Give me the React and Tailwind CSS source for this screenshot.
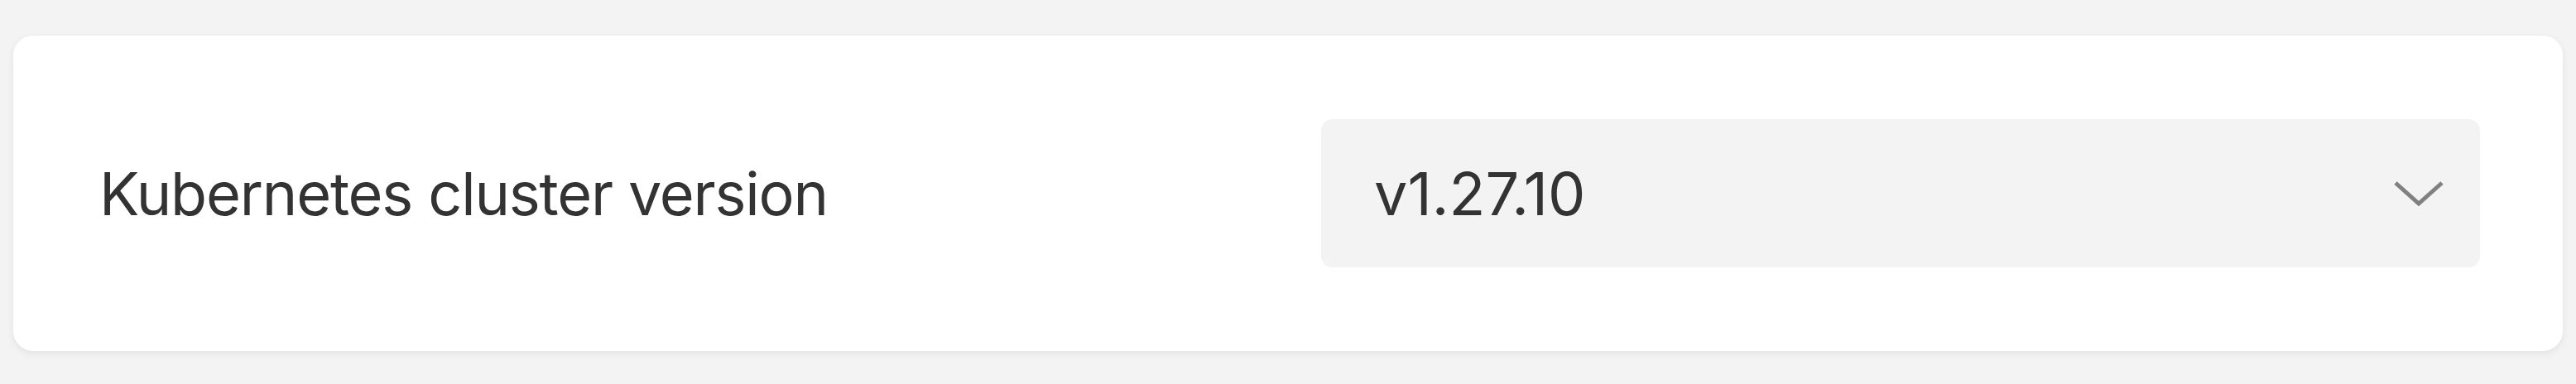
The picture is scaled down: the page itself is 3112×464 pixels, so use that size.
import React from "react";

// Version select row
function VersionSelect({ value }) {
    return (
        <div className="w-[1400px] h-[179px] shrink-0 rounded-[14px] bg-[#f3f3f3] flex items-center justify-between pl-[64px] pr-[44px]">
            <span className="text-[72px] leading-none text-[#333333]">{value}</span>
            <svg width="60" height="30" viewBox="0 0 60 30" fill="none">
                <path d="M2 2 L30 27 L58 2" stroke="#808080" strokeWidth="5" />
            </svg>
        </div>
    );
}

export default function App() {
    return (
        <div
            className="w-[3112px] h-[464px] bg-[#f3f3f3] pt-[43px] px-[16px]"
            style={{ fontFamily: "Inter, 'Noto Sans', sans-serif" }}
        >
            <div className="h-[381px] bg-white rounded-[24px] shadow-[0_3px_10px_rgba(0,0,0,0.07)] flex items-center justify-between pl-[104px] pr-[100px]">
                <span className="text-[72px] leading-none tracking-[-1.2px] text-[#333333]">
                    Kubernetes cluster version
                </span>
                <VersionSelect value="v1.27.10" />
            </div>
        </div>
    );
}
